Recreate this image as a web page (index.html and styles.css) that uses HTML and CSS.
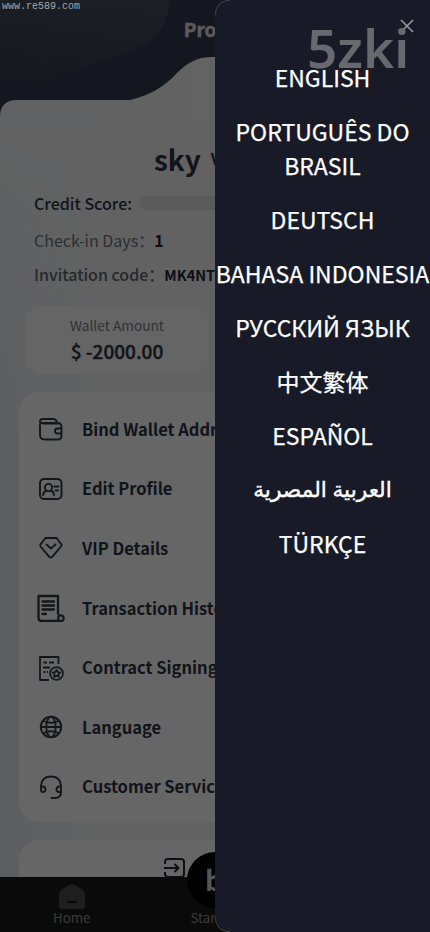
FILE: index.html
```html
<!DOCTYPE html>
<html lang="en">
<head>
<meta charset="utf-8">
<meta name="viewport" content="width=device-width, initial-scale=1">
<title>Profile</title>
<link rel="stylesheet" href="styles.css">
</head>
<body>
<div class="app">
  <main class="page">
    <svg class="wave" viewBox="0 0 430 125" aria-hidden="true">
      <defs>
        <linearGradient id="blob" x1="0.7" y1="0" x2="0.45" y2="1">
          <stop offset="0" stop-color="#454e5c"/>
          <stop offset="1" stop-color="#343b4e"/>
        </linearGradient>
        <linearGradient id="sheet" x1="0" y1="0" x2="1" y2="0">
          <stop offset="0" stop-color="#f3f5f7"/>
          <stop offset="1" stop-color="#f7f8fa"/>
        </linearGradient>
      </defs>
      <rect width="430" height="125" fill="#333a4e"/>
      <path d="M0 0H170C168 24 157 40 137 49C112 60 76 69 49 82Q22 92 0 94Z" fill="url(#blob)"/>
      <path d="M0 125V117Q0 100 17 100H130C148 96 164 87 176 74C187 63 196 57 213 57C232 57 244 63 255 74C267 87 282 96 300 100H413Q430 100 430 117V125Z" fill="url(#sheet)"/>
    </svg>
    <h1 class="title">Profile</h1>
    <div class="user"><span>sky</span><span class="vip">VIP</span></div>
    <section class="facts">
      <div class="fact credit"><span>Credit Score:</span><i class="bar"></i></div>
      <div class="fact days"><span>Check-in Days：</span><b>1</b></div>
      <div class="fact code"><span>Invitation code：</span><b>MK4NT</b></div>
    </section>
    <section class="wallets">
      <div class="wallet"><span>Wallet Amount</span><b>$ -2000.00</b></div>
      <div class="wallet"></div>
    </section>
    <nav class="card menu">
      <a class="row"><svg viewBox="0 0 28 28"><path d="M22 8.500H6M3 9V20Q3 24.500 7.500 24.500H20.500Q24.500 24.500 24.500 20.500V12Q24.500 8 20.500 8H5Q3 8 3 6.500Q3 4 6 4H16Q19.500 4 20 8M24.500 13.500H20.500Q18 13.500 18 16Q18 18.500 20.500 18.500H24.500"/></svg>Bind Wallet Address</a>
      <a class="row"><svg viewBox="0 0 28 28"><rect x="3" y="4" width="21.500" height="20" rx="4"/><circle cx="11.500" cy="12.500" r="3.600"/><path d="M6 20Q6.500 16.500 9.500 15.800M13.500 15.800Q16.800 16.500 17 20M17.500 11.500H21.500M18.500 15.500H21"/></svg>Edit Profile</a>
      <a class="row"><svg viewBox="0 0 28 28"><path d="M8.500 4H19.500L24.500 10.500Q25 11.500 24 12.500L15.200 22.800Q13.800 24.200 12.300 22.800L3.500 12.500Q2.700 11.500 3.500 10.300ZM9.500 10.500L14 14.500L18.500 10.500"/></svg>VIP Details</a>
      <a class="row"><svg viewBox="0 0 28 28" class="heavy"><path d="M21 20V2H1.500V23.500Q1.500 27 4.500 27H24Q27 27 26.500 23.500Q26 21 22.500 21.500Q20.500 22.500 21.500 27M5.500 7.500H17M5.500 11.500H17M5.500 15.500H17M5.500 20H9"/></svg>Transaction History</a>
      <a class="row"><svg viewBox="0 0 28 28" class="thin"><path d="M21.500 10V3H3V26H12M6.500 8.500H10M12 8.500H17M6 13.500H13M6.500 18H8.500M10 18H11"/><circle cx="19.500" cy="19.500" r="6.400"/><path class="star" d="M19.500 15.800L20.700 18.100L23.300 18.500L21.400 20.300L21.900 22.900L19.500 21.700L17.100 22.900L17.600 20.300L15.700 18.500L18.300 18.100Z"/></svg>Contract Signing</a>
      <a class="row"><svg viewBox="0 0 28 28"><circle cx="14" cy="14" r="10.200"/><ellipse cx="14" cy="14" rx="4.700" ry="10.200"/><path d="M6.500 8Q14 11.500 21.500 8M3.800 14H24.200M6.500 20Q14 16.500 21.500 20"/></svg>Language</a>
      <a class="row"><svg viewBox="0 0 28 28"><path d="M4 16V12.500Q5 3.500 14 3.500Q23 3.500 24 12.500V19Q24 25 18 25H14.500M4 13.500H5.500Q8.500 13.500 8.500 16.500Q8.500 19 6 19Q4 19 4 17ZM24 13.500H22.500Q19.500 13.500 19.500 16.500Q19.500 19 22 19Q24 19 24 17Z"/></svg>Customer Service</a>
    </nav>
    <div class="card logout">
      <svg viewBox="0 0 24 24"><path d="M2 7V5Q2 2 5 2H18Q21 2 21 5V17Q21 20 18 20H5Q2 20 2 17V15M1 11H15.500M11.500 7L15.500 11L11.500 15"/></svg>
    </div>
  </main>
  <footer class="tabs">
    <div class="tab"><svg viewBox="0 0 26 25"><path d="M10.500 .8Q13 -.6 15.500 .8L23.500 6Q26 8 26 11V21Q26 25 22 25H4Q0 25 0 21V11Q0 8 2.500 6Z" fill="#4c4c4c"/><path d="M9 18H17" stroke="#161616" stroke-width="2" stroke-linecap="round"/></svg><span>Home</span></div>
    <div class="tab start"><div class="orb">b</div><span>Starting</span></div>
    <div class="tab"></div>
  </footer>
  <div class="shade"></div>
  <aside class="drawer">
    <ul class="langs">
      <li>ENGLISH</li>
      <li>PORTUGUÊS DO BRASIL</li>
      <li>DEUTSCH</li>
      <li class="wide">BAHASA INDONESIA</li>
      <li>РУССКИЙ ЯЗЫК</li>
      <li>中文繁体</li>
      <li>ESPAÑOL</li>
      <li class="arabic" lang="ar" dir="rtl">العربية المصرية</li>
      <li>TÜRKÇE</li>
    </ul>
    <svg class="close" viewBox="0 0 14 14"><path d="M1 1L13 13M13 1L1 13"/></svg>
  </aside>
  <div class="brand">5zki</div>
  <div class="site">www.re589.com</div>
</div>
</body>
</html>
```
FILE: styles.css
```css
* { box-sizing: border-box; }
body { margin: 0; background: #646567; font-family: "Noto Sans CJK SC", "Noto Sans", sans-serif; }
.app { position: relative; width: 430px; height: 932px; overflow: hidden; color: #2d3244; }
.page { height: 932px; overflow: hidden; background: linear-gradient(180deg, #f5f6f8 120px, transparent 450px), linear-gradient(90deg, #e5eaee 0, #f5f6f8 100px); }
.wave { position: absolute; left: 0; top: 0; width: 430px; height: 125px; }
.title { position: relative; margin: 0; padding-top: 14px; height: 141px; font-size: 19px; line-height: 30px; font-weight: 700; text-align: center; color: #e4e4e4; -webkit-text-stroke: .4px #e4e4e4; }
.user { display: flex; align-items: center; gap: 10px; height: 35px; padding-left: 154px; font-size: 28px; font-weight: 700; }
.vip { font-size: 16px; line-height: 20px; padding-bottom: 2px; }
.facts { padding: 14px 34px 0; }
.fact { display: flex; align-items: center; font-size: 16px; white-space: nowrap; }
.credit { height: 26px; font-weight: 500; gap: 7px; }
.bar { flex: 1; height: 14px; border-radius: 7px; background: #e0e1e4; }
.days { height: 48px; color: #70747c; }
.code { height: 20px; color: #60646d; font-weight: 500; }
.fact b { color: #24262e; }
.code b { font-size: 14.500px; }
.wallets { display: flex; gap: 12px; padding: 22px 25px 0; }
.wallet { flex: none; width: 184px; height: 68px; border-radius: 17px; background: #fdfdfd; display: flex; flex-direction: column; align-items: center; padding-top: 9px; }
.wallet span { font-size: 13.700px; line-height: 21px; color: #787c86; }
.wallet b { font-size: 19px; line-height: 29px; font-weight: 500; -webkit-text-stroke: .4px #2d3244; }
.card { margin: 18px 19px 0; border-radius: 20px; background: #fff; }
.menu { height: 430px; padding: 7px 17px; }
.row { display: flex; align-items: center; gap: 17px; height: 59.600px; font-size: 16.500px; font-weight: 700; white-space: nowrap; }
.row svg { width: 28px; height: 28px; flex: none; margin: 1px 0 0 1px; fill: none; stroke: #343945; stroke-width: 1.900; stroke-linejoin: round; stroke-linecap: round; }
.row .heavy { stroke-width: 2.300; }
.row .thin { stroke-width: 1.800; stroke-linecap: butt; }
.row .star { stroke-width: 1.700; }
.logout { height: 80px; padding: 17px 0 0 144px; }
.logout svg { width: 24px; height: 24px; fill: none; stroke: #252a35; stroke-width: 2; stroke-linejoin: round; }
.tabs { position: absolute; left: 0; right: 0; bottom: 0; height: 55px; display: grid; grid-template-columns: repeat(3, 1fr); background: #1b1b1b; color: #929292; }
.tab { display: flex; flex-direction: column; align-items: center; padding-top: 7px; font-size: 13.300px; }
.tab svg { width: 26px; height: 25px; }
.tab span { line-height: 18px; }
.start .orb { flex: none; width: 56px; height: 56px; margin-top: -32px; border-radius: 50%; background: #000; color: #d8d8d8; font-size: 28px; line-height: 54px; font-weight: 700; padding-left: 18px; }
.start span { margin-top: 1px; }
.shade { position: absolute; inset: 0; background: rgba(0, 0, 0, .6); }
.drawer { position: absolute; top: 0; right: 0; width: 215px; height: 932px; border-radius: 17px 0 0 17px; background: #181b27; color: #fff; }
.drawer::before, .drawer::after { content: ""; position: absolute; left: 0; width: 14px; height: 14px; border-left: 1px solid #41434b; }
.drawer::before { top: 0; border-top: 1px solid #41434b; border-radius: 14px 0 0 0; }
.drawer::after { bottom: 0; border-bottom: 1px solid #41434b; border-radius: 0 0 0 14px; }
.langs { list-style: none; margin: 0; padding: 60px 0 0; display: flex; flex-direction: column; align-items: center; gap: 20px; font-size: 23px; line-height: 34px; font-weight: 400; text-align: center; -webkit-text-stroke: .25px #fff; }
.wide { white-space: nowrap; }
.arabic { font-family: "Noto Sans", "DejaVu Sans", sans-serif; font-size: 21.700px; -webkit-text-stroke: .4px #fff; }
.close { position: absolute; left: 185px; top: 19px; width: 14px; height: 14px; fill: none; stroke: #9b9da4; stroke-width: 1.500; }
.brand { position: absolute; left: 307px; top: 14px; font: 600 53px/68px "Noto Sans", sans-serif; color: #68696f; }
.site { position: absolute; left: 2px; top: 1px; font: 10px/12px "Liberation Mono", monospace; color: #a4a6aa; }
```
